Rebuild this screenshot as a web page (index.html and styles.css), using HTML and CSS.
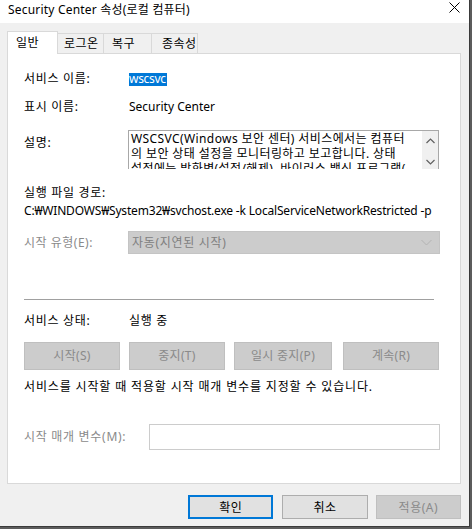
FILE: index.html
```html
<!DOCTYPE html>
<html lang="ko">
<head>
<meta charset="utf-8">
<title>Security Center 속성</title>
<link rel="stylesheet" href="styles.css">
</head>
<body>
<div class="window">
  <div class="titlebar">
    <span class="title">Security Center 속성(로컬 컴퓨터)</span>
    <svg class="close" width="11" height="11" viewBox="0 0 11 11"><path d="M0.5 0.5 L10.5 10.5 M10.5 0.5 L0.5 10.5" stroke="#000" stroke-width="1" fill="none"/></svg>
  </div>
  <div class="body">
    <div class="tabs">
      <div class="tab active">일반</div>
      <div class="tab t2">로그온</div>
      <div class="tab t3">복구</div>
      <div class="tab t4">종속성</div>
    </div>
    <div class="panel">
      <div class="row r1">
        <span class="label ko">서비스 이름:</span>
        <span class="value"><span class="sel">wscsvc</span></span>
      </div>
      <div class="row r2">
        <span class="label ko">표시 이름:</span>
        <span class="value">Security Center</span>
      </div>
      <div class="row r3">
        <span class="label lbl-top ko">설명:</span>
        <div class="desc">
          <div class="desc-text">
            <span class="line">WSCSVC(Windows 보안 센터) 서비스에서는 컴퓨터</span>
            <span class="line">의 보안 상태 설정을 모니터링하고 보고합니다. 상태</span>
            <span class="line">설정에는 방화벽(설정/해제), 바이러스 백신 프로그램(</span>
          </div>
          <div class="scroll">
            <svg width="9" height="6" viewBox="0 0 9 6"><path d="M0.5 5 L4.5 1 L8.5 5" stroke="#606060" stroke-width="1.2" fill="none"/></svg>
            <svg width="9" height="6" viewBox="0 0 9 6"><path d="M0.5 1 L4.5 5 L8.5 1" stroke="#606060" stroke-width="1.2" fill="none"/></svg>
          </div>
        </div>
      </div>
      <div class="row r4"><span class="label ko">실행 파일 경로:</span></div>
      <div class="row r5"><span class="path">C:₩WINDOWS₩System32₩svchost.exe -k LocalServiceNetworkRestricted -p</span></div>
      <div class="row r6">
        <span class="label disabled">시작 유형(E):</span>
        <div class="combo">
          <span class="ko">자동(지연된 시작)</span>
          <svg width="11" height="7" viewBox="0 0 11 7"><path d="M0.5 1 L5.5 6 L10.5 1" stroke="#b3b3b3" stroke-width="1" fill="none"/></svg>
        </div>
      </div>
      <div class="sep"></div>
      <div class="row r7">
        <span class="label ko">서비스 상태:</span>
        <span class="value ko">실행 중</span>
      </div>
      <div class="row r8 btnrow">
        <div class="btn dis b1">시작(S)</div>
        <div class="btn dis b2">중지(T)</div>
        <div class="btn dis b3">일시 중지(P)</div>
        <div class="btn dis b4">계속(R)</div>
      </div>
      <div class="row r9"><span class="note ko">서비스를 시작할 때 적용할 시작 매개 변수를 지정할 수 있습니다.</span></div>
      <div class="row r10">
        <span class="label disabled wide ko">시작 매개 변수(M):</span>
        <div class="input"></div>
      </div>
    </div>
    <div class="footer">
      <div class="fbtn default">확인</div>
      <div class="fbtn">취소</div>
      <div class="fbtn fdis">적용(A)</div>
    </div>
  </div>
</div>
</body>
</html>
```
FILE: styles.css
```css
html, body {
  margin: 0;
  padding: 0;
}
body {
  width: 472px;
  height: 529px;
  overflow: hidden;
  background: #5c5c5c;
  font-family: "Noto Sans", "Noto Sans CJK KR", sans-serif;
  font-size: 12px;
  color: #000;
}
.ko {
  letter-spacing: 0.7px;
}
.window {
  width: 469px;
  height: 526px;
  border-right: 1px solid #3a3a3a;
  border-bottom: 1px solid #3a3a3a;
  background: #f0f0f0;
  display: flex;
  flex-direction: column;
}
.titlebar {
  height: 23px;
  background: #fff;
  display: flex;
  align-items: flex-start;
  justify-content: space-between;
  padding: 0 9px 0 8px;
}
.title {
  line-height: 19px;
  font-size: 12px;
  letter-spacing: 0.2px;
}
.close {
  margin-top: 2px;
}
.body {
  flex: 1;
  padding: 8px 0 0 7px;
  display: flex;
  flex-direction: column;
}
.tabs {
  display: flex;
  align-items: flex-end;
  height: 22px;
}
.tab {
  height: 20px;
  line-height: 19px;
  box-sizing: border-box;
  border: 1px solid #d9d9d9;
  border-bottom: none;
  border-left: none;
  background: #f0f0f0;
  padding-left: 6px;
  letter-spacing: 0.5px;
}
.tab.active {
  height: 23px;
  margin-bottom: -1px;
  background: #fff;
  border-left: 1px solid #d9d9d9;
  width: 51px;
  padding-left: 8px;
  line-height: 21px;
  position: relative;
  z-index: 1;
}
.t2 { width: 46px; }
.t3 { width: 48px; padding-left: 8px; }
.t4 { width: 46px; padding-left: 10px; }
.panel {
  width: 454px;
  height: 431px;
  box-sizing: border-box;
  background: #fff;
  border: 1px solid #d9d9d9;
  padding: 0 0 0 16px;
  display: flex;
  flex-direction: column;
}
.row {
  display: flex;
  align-items: center;
  height: 16px;
  line-height: 16px;
  white-space: nowrap;
}
.label {
  width: 105px;
  flex: none;
}
.label.wide { width: 125px; }
.disabled { color: #8a8a8a; }
.sel {
  background: #0078d7;
  color: #fff;
  display: inline-block;
  height: 13px;
  line-height: 12px;
  padding: 0 1px 0 0;
  letter-spacing: -0.3px;
}
.r1 { margin-top: 17px; }
.r2 { margin-top: 12px; }
.r3 { margin-top: 15px; height: 39px; align-items: flex-start; }
.lbl-top { padding-top: 5px; width: 104px; }
.desc {
  width: 311px;
  height: 39px;
  box-sizing: border-box;
  border: 1px solid #a8a8a8;
  border-bottom: none;
  display: flex;
  overflow: hidden;
}
.desc-text {
  flex: 1;
  padding-left: 2px;
  line-height: 15px;
  overflow: hidden;
  letter-spacing: 0.4px;
}
.line {
  display: block;
  white-space: nowrap;
}
.scroll {
  width: 16px;
  flex: none;
  background: #f0f0f0;
  display: flex;
  flex-direction: column;
  align-items: center;
  padding-top: 7px;
  gap: 15px;
}
.r4 { margin-top: 16px; }
.r5 { margin-top: 2px; }
.path { letter-spacing: -0.18px; }
.r6 { margin-top: 12px; height: 23px; }
.r6 .label { width: 104px; letter-spacing: 0.5px; }
.combo {
  width: 312px;
  height: 23px;
  box-sizing: border-box;
  background: #cccccc;
  border: 1px solid #c4c4c4;
  color: #808080;
  display: flex;
  align-items: center;
  justify-content: space-between;
  padding: 0 7px 0 3px;
}
.sep {
  margin-top: 45px;
  width: 410px;
  height: 1px;
  background: #a0a0a0;
}
.r7 { margin-top: 13px; }
.r8 { margin-top: 13px; height: 28px; }
.btn {
  height: 28px;
  box-sizing: border-box;
  display: flex;
  align-items: center;
  justify-content: center;
  letter-spacing: 0.3px;
}
.dis {
  background: #cccccc;
  border: 1px solid #bfbfbf;
  color: #8a8a8a;
}
.b1 { width: 96px; }
.b2 { width: 96px; margin-left: 9px; }
.b3 { width: 98px; margin-left: 9px; }
.b4 { width: 96px; margin-left: 11px; }
.r9 { margin-top: 9px; }
.note { letter-spacing: 0.85px; }
.r10 { margin-top: 29px; height: 26px; }
.input {
  width: 291px;
  height: 26px;
  box-sizing: border-box;
  border: 1px solid #cccccc;
  background: #fff;
}
.footer {
  display: flex;
  margin-top: 11px;
  padding-left: 181px;
}
.fbtn {
  width: 86px;
  height: 24px;
  box-sizing: border-box;
  background: #e1e1e1;
  border: 1px solid #adadad;
  display: flex;
  align-items: center;
  justify-content: center;
  margin-right: 8px;
  letter-spacing: 0.5px;
}
.fbtn.default {
  border: 2px solid #0078d7;
  margin-right: 9px;
}
.fbtn.fdis {
  background: #cccccc;
  border-color: #bfbfbf;
  color: #8a8a8a;
}
```
